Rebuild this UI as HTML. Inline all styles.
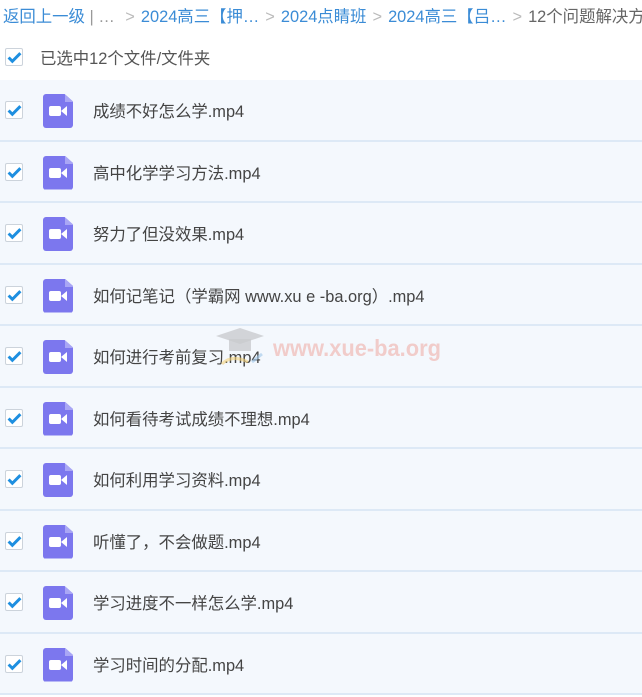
<!DOCTYPE html>
<html><head><meta charset="utf-8"><style>
*{margin:0;padding:0;box-sizing:border-box}
body{width:642px;height:697px;overflow:hidden;background:#fff;font-family:"Liberation Sans","Noto Sans CJK SC",sans-serif;position:relative}
.bc{position:absolute;top:3px;left:3px;font-size:16.4px;color:#3b8cd6;white-space:nowrap}
.bc .g{color:#999}.bc .d{color:#666}.bc .s{color:#bbb;margin:0 6px}
.sel{position:absolute;top:45px;font-size:16.4px;color:#555}
.cb{position:absolute;width:18px;height:18px;border:1px solid #ccd3db;border-radius:2px;background:#fff}
.cb svg{position:absolute;left:1px;top:2px}
.row{position:absolute;left:0;width:642px;height:61.5px;background:#f4f8fd;border-bottom:2px solid #dde9f6}
.row .cb{left:5px;top:21px}
.ic{position:absolute;left:43px;top:14px;width:30px;height:34px;background:#7c77ee;border-radius:3px;clip-path:polygon(0 0,72% 0,100% 22%,100% 100%,0 100%)}
.ic .f{position:absolute;right:0;top:0;width:8px;height:8px;background:#a9a6f5}
.ic .cam{position:absolute;left:6px;top:12px;width:12px;height:10px;background:#fff;border-radius:2px}
.ic .tri{position:absolute;left:18px;top:12px;width:0;height:0;border-top:5px solid transparent;border-bottom:5px solid transparent;border-right:6px solid #fff}
.nm{position:absolute;left:93px;top:18px;font-size:16.4px;color:#444}
.wm{position:absolute;left:273px;top:335px;font-size:23px;font-weight:bold;color:rgba(238,150,140,.45);font-family:"Liberation Sans Narrow","Liberation Sans",sans-serif;transform:scaleX(.95);transform-origin:left}
</style></head><body>
<div class="bc">返回上一级<span class="g"> | … </span><span class="s">&gt;</span>2024高三【押…<span class="s">&gt;</span>2024点睛班<span class="s">&gt;</span>2024高三【吕…<span class="s">&gt;</span><span class="d">12个问题解决方</span></div>
<div class="cb" style="left:5px;top:48px"><svg width="15" height="13" viewBox="0 0 14 12"><path d="M1.5 6l3.5 3.5L12.5 2" stroke="#1e8fe0" stroke-width="2.8" fill="none"/></svg></div>
<div class="sel" style="left:40px">已选中12个文件/文件夹</div>
<div class="row" style="top:80px"><div class="cb"><svg width="15" height="13" viewBox="0 0 14 12"><path d="M1.5 6l3.5 3.5L12.5 2" stroke="#1e8fe0" stroke-width="2.8" fill="none"/></svg></div><div class="ic"><div class="f"></div><div class="cam"></div><div class="tri"></div></div><div class="nm">成绩不好怎么学.mp4</div></div>
<div class="row" style="top:141.5px"><div class="cb"><svg width="15" height="13" viewBox="0 0 14 12"><path d="M1.5 6l3.5 3.5L12.5 2" stroke="#1e8fe0" stroke-width="2.8" fill="none"/></svg></div><div class="ic"><div class="f"></div><div class="cam"></div><div class="tri"></div></div><div class="nm">高中化学学习方法.mp4</div></div>
<div class="row" style="top:203px"><div class="cb"><svg width="15" height="13" viewBox="0 0 14 12"><path d="M1.5 6l3.5 3.5L12.5 2" stroke="#1e8fe0" stroke-width="2.8" fill="none"/></svg></div><div class="ic"><div class="f"></div><div class="cam"></div><div class="tri"></div></div><div class="nm">努力了但没效果.mp4</div></div>
<div class="row" style="top:264.5px"><div class="cb"><svg width="15" height="13" viewBox="0 0 14 12"><path d="M1.5 6l3.5 3.5L12.5 2" stroke="#1e8fe0" stroke-width="2.8" fill="none"/></svg></div><div class="ic"><div class="f"></div><div class="cam"></div><div class="tri"></div></div><div class="nm">如何记笔记（学霸网 www.xu e -ba.org）.mp4</div></div>
<div class="row" style="top:326px"><div class="cb"><svg width="15" height="13" viewBox="0 0 14 12"><path d="M1.5 6l3.5 3.5L12.5 2" stroke="#1e8fe0" stroke-width="2.8" fill="none"/></svg></div><div class="ic"><div class="f"></div><div class="cam"></div><div class="tri"></div></div><div class="nm">如何进行考前复习.mp4</div></div>
<div class="row" style="top:387.5px"><div class="cb"><svg width="15" height="13" viewBox="0 0 14 12"><path d="M1.5 6l3.5 3.5L12.5 2" stroke="#1e8fe0" stroke-width="2.8" fill="none"/></svg></div><div class="ic"><div class="f"></div><div class="cam"></div><div class="tri"></div></div><div class="nm">如何看待考试成绩不理想.mp4</div></div>
<div class="row" style="top:449px"><div class="cb"><svg width="15" height="13" viewBox="0 0 14 12"><path d="M1.5 6l3.5 3.5L12.5 2" stroke="#1e8fe0" stroke-width="2.8" fill="none"/></svg></div><div class="ic"><div class="f"></div><div class="cam"></div><div class="tri"></div></div><div class="nm">如何利用学习资料.mp4</div></div>
<div class="row" style="top:510.5px"><div class="cb"><svg width="15" height="13" viewBox="0 0 14 12"><path d="M1.5 6l3.5 3.5L12.5 2" stroke="#1e8fe0" stroke-width="2.8" fill="none"/></svg></div><div class="ic"><div class="f"></div><div class="cam"></div><div class="tri"></div></div><div class="nm">听懂了，不会做题.mp4</div></div>
<div class="row" style="top:572px"><div class="cb"><svg width="15" height="13" viewBox="0 0 14 12"><path d="M1.5 6l3.5 3.5L12.5 2" stroke="#1e8fe0" stroke-width="2.8" fill="none"/></svg></div><div class="ic"><div class="f"></div><div class="cam"></div><div class="tri"></div></div><div class="nm">学习进度不一样怎么学.mp4</div></div>
<div class="row" style="top:633.5px"><div class="cb"><svg width="15" height="13" viewBox="0 0 14 12"><path d="M1.5 6l3.5 3.5L12.5 2" stroke="#1e8fe0" stroke-width="2.8" fill="none"/></svg></div><div class="ic"><div class="f"></div><div class="cam"></div><div class="tri"></div></div><div class="nm">学习时间的分配.mp4</div></div>
<svg style="position:absolute;left:212px;top:324px" width="56" height="48"><path d="M4 12L28 4 52 12 28 20Z" fill="#c9cbce" opacity=".8"/><rect x="17" y="15" width="22" height="12" fill="#c9cbce" opacity=".8"/><path d="M10 40 Q20 30 36 38" stroke="#f4d27a" stroke-width="3" fill="none" opacity=".6"/><path d="M40 38 L50 30" stroke="#9ec7ea" stroke-width="3" opacity=".6"/></svg>
<div class="wm">www.xue-ba.org</div>
</body></html>
